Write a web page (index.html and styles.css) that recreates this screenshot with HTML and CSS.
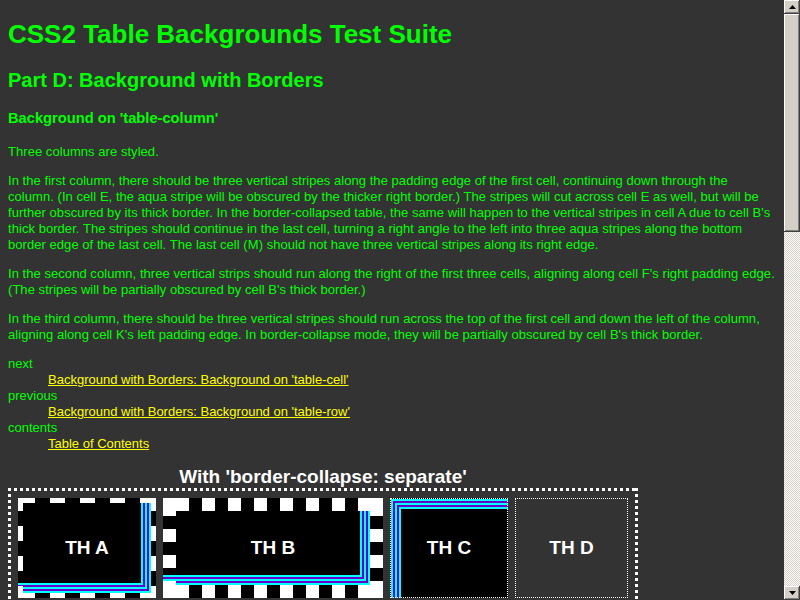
FILE: index.html
```html
<!DOCTYPE html>
<html>
<head>
<meta charset="utf-8">
<title>CSS2 Table Backgrounds Test Suite</title>
<link rel="stylesheet" href="styles.css">
</head>
<body>
<h1 class="title">CSS2 Table Backgrounds Test Suite</h1>
<h2 class="part">Part D: Background with Borders</h2>
<h3 class="section">Background on 'table-column'</h3>
<p class="para">Three columns are styled.</p>
<p class="para">In the first column, there should be three vertical stripes along the padding edge of the first cell, continuing down through the column. (In cell E, the aqua stripe will be obscured by the thicker right border.) The stripes will cut across cell E as well, but will be further obscured by its thick border. In the border-collapsed table, the same will happen to the vertical stripes in cell A due to cell B's thick border. The stripes should continue in the last cell, turning a right angle to the left into three aqua stripes along the bottom border edge of the last cell. The last cell (M) should not have three vertical stripes along its right edge.</p>
<p class="para">In the second column, three vertical strips should run along the right of the first three cells, aligning along cell F's right padding edge. (The stripes will be partially obscured by cell B's thick border.)</p>
<p class="para">In the third column, there should be three vertical stripes should run across the top of the first cell and down the left of the column, aligning along cell K's left padding edge. In border-collapse mode, they will be partially obscured by cell B's thick border.</p>
<dl class="nav">
  <dt>next</dt>
  <dd><a href="#">Background with Borders: Background on 'table-cell'</a></dd>
  <dt>previous</dt>
  <dd><a href="#">Background with Borders: Background on 'table-row'</a></dd>
  <dt>contents</dt>
  <dd><a href="#">Table of Contents</a></dd>
</dl>
<div class="demo">
  <div class="caption">With 'border-collapse: separate'</div>
  <div class="tbl">
    <div class="cell th-a">TH A</div>
    <div class="cell th-b">TH B</div>
    <div class="cell th-c">TH C</div>
    <div class="cell th-d">TH D</div>
  </div>
</div>
<div class="scrollbar">
  <div class="sb-btn"><svg width="7" height="4" viewBox="0 0 7 4"><polygon points="3.5,0 7,4 0,4" fill="#000"/></svg></div>
  <div class="sb-thumb"></div>
  <div class="sb-track"></div>
  <div class="sb-btn"><svg width="7" height="4" viewBox="0 0 7 4"><polygon points="0,0 7,0 3.5,4" fill="#000"/></svg></div>
</div>
</body>
</html>
```
FILE: styles.css
```css
html, body {
  margin: 0;
  padding: 0;
  height: 100%;
  overflow: hidden;
}
body {
  display: flow-root;
  box-sizing: border-box;
  padding: 8px 24px 0 8px;
  background: #333333;
  color: #00ff00;
  font-family: "Liberation Sans", Arial, sans-serif;
  font-size: 13px;
  line-height: 16px;
}
.title {
  margin: 11px 0 0;
  font-size: 26px;
  line-height: 30px;
  font-weight: bold;
}
.part {
  margin: 20px 0 0;
  font-size: 20px;
  line-height: 23px;
  font-weight: bold;
}
.section {
  margin: 18px 0 17px;
  font-size: 14.7px;
  line-height: 17px;
  font-weight: bold;
}
.para {
  margin: 0 0 13px;
  letter-spacing: 0.05px;
}
.nav {
  margin: 0 0 13px;
}
.nav dt { margin: 0; }
.nav dd { margin: 0 0 0 40px; }
.nav a {
  color: #ffff00;
  text-decoration: underline;
}
.demo {
  width: 630px;
}
.caption {
  text-align: center;
  color: #ffffff;
  font-weight: bold;
  font-size: 19px;
  line-height: 23px;
}
.tbl {
  display: flex;
  align-items: flex-start;
  gap: 7px;
  padding: 7px;
  height: 200px;
  border: 3px solid transparent;
  background:
    repeating-linear-gradient(90deg, #fff 0 3px, transparent 3px 6px) left top / 100% 3px no-repeat border-box,
    repeating-linear-gradient(90deg, #fff 0 3px, transparent 3px 6px) left bottom / 100% 3px no-repeat border-box,
    repeating-linear-gradient(180deg, #fff 0 3px, transparent 3px 6px) left top / 3px 100% no-repeat border-box,
    repeating-linear-gradient(180deg, #fff 0 3px, transparent 3px 6px) right top / 3px 100% no-repeat border-box;
}
.cell {
  box-sizing: border-box;
  height: 100px;
  flex: none;
  display: flex;
  align-items: center;
  justify-content: center;
  color: #ffffff;
  font-weight: bold;
  font-size: 19px;
  line-height: 22px;
}
.th-a {
  width: 138px;
  border: 5px solid transparent;
  background:
    repeating-linear-gradient(180deg, #fff 0 13px, transparent 13px 28px, #fff 28px 30px) left top / 5px 100% no-repeat border-box,
    repeating-linear-gradient(180deg, #fff 0 13px, transparent 13px 28px, #fff 28px 30px) right top / 5px 100% no-repeat border-box,
    repeating-linear-gradient(90deg, transparent 0 2px, #fff 2px 17px, transparent 17px 30px) left top / 100% 5px no-repeat border-box,
    repeating-linear-gradient(90deg, transparent 0 2px, #fff 2px 17px, transparent 17px 30px) left bottom / 100% 5px no-repeat border-box,
    linear-gradient(#000, #000) left top / calc(100% - 15px) calc(100% - 15px) no-repeat border-box,
    linear-gradient(#0ff, #0ff) left top / calc(100% - 13px) calc(100% - 13px) no-repeat border-box,
    linear-gradient(#60c, #60c) left top / calc(100% - 11px) calc(100% - 11px) no-repeat border-box,
    linear-gradient(#0ff, #0ff) left top / calc(100% - 9px) calc(100% - 9px) no-repeat border-box,
    linear-gradient(#60c, #60c) left top / calc(100% - 7px) calc(100% - 7px) no-repeat border-box,
    linear-gradient(#0ff, #0ff) left top / calc(100% - 5px) calc(100% - 5px) no-repeat border-box,
    #000;
}
.th-b {
  width: 220px;
  border: 13px solid transparent;
  background:
    linear-gradient(#fff, #fff) left top / 13px 13px no-repeat border-box,
    linear-gradient(#fff, #fff) right top / 13px 13px no-repeat border-box,
    linear-gradient(#fff, #fff) left bottom / 13px 13px no-repeat border-box,
    linear-gradient(#fff, #fff) right bottom / 13px 13px no-repeat border-box,
    repeating-linear-gradient(180deg, transparent 0 5px, #fff 5px 18px, transparent 18px 26px) left top / 13px 100% no-repeat border-box,
    repeating-linear-gradient(180deg, transparent 0 5px, #fff 5px 18px, transparent 18px 26px) right top / 13px 100% no-repeat border-box,
    repeating-linear-gradient(90deg, transparent 0 13px, #fff 13px 26px) left top / 100% 13px no-repeat border-box,
    repeating-linear-gradient(90deg, transparent 0 13px, #fff 13px 26px) left bottom / 100% 13px no-repeat border-box,
    linear-gradient(#000, #000) left top / calc(100% - 23px) calc(100% - 23px) no-repeat border-box,
    linear-gradient(#0ff, #0ff) left top / calc(100% - 21px) calc(100% - 21px) no-repeat border-box,
    linear-gradient(#60c, #60c) left top / calc(100% - 19px) calc(100% - 19px) no-repeat border-box,
    linear-gradient(#0ff, #0ff) left top / calc(100% - 17px) calc(100% - 17px) no-repeat border-box,
    linear-gradient(#60c, #60c) left top / calc(100% - 15px) calc(100% - 15px) no-repeat border-box,
    linear-gradient(#0ff, #0ff) left top / calc(100% - 13px) calc(100% - 13px) no-repeat border-box,
    #000;
}
.th-c {
  width: 118px;
  border: 1px dotted #fff;
  background:
    linear-gradient(#000, #000) right bottom / calc(100% - 11px) calc(100% - 11px) no-repeat border-box,
    linear-gradient(#0ff, #0ff) right bottom / calc(100% - 9px) calc(100% - 9px) no-repeat border-box,
    linear-gradient(#60c, #60c) right bottom / calc(100% - 7px) calc(100% - 7px) no-repeat border-box,
    linear-gradient(#0ff, #0ff) right bottom / calc(100% - 5px) calc(100% - 5px) no-repeat border-box,
    linear-gradient(#60c, #60c) right bottom / calc(100% - 3px) calc(100% - 3px) no-repeat border-box,
    linear-gradient(#0ff, #0ff) right bottom / calc(100% - 1px) calc(100% - 1px) no-repeat border-box,
    #000;
}
.th-d {
  width: 113px;
  border: 1px dotted #fff;
}
.scrollbar {
  position: fixed;
  top: 0;
  right: 0;
  width: 16px;
  height: 100vh;
  display: flex;
  flex-direction: column;
}
.sb-btn {
  box-sizing: border-box;
  height: 14px;
  flex: none;
  display: flex;
  align-items: center;
  justify-content: center;
  background: #d4d0c8;
  box-shadow: inset -1px -1px #404040, inset 1px 1px #ffffff, inset -2px -2px #808080;
}
.sb-btn svg { display: block; }
.sb-thumb {
  height: 218px;
  flex: none;
  background: #d4d0c8;
  box-shadow: inset -1px -1px #404040, inset 1px 1px #ffffff, inset -2px -2px #808080;
}
.sb-track {
  flex: 1;
  background: repeating-conic-gradient(#ffffff 0 25%, #d4d0c8 0 50%) 0 0 / 2px 2px;
}
```
